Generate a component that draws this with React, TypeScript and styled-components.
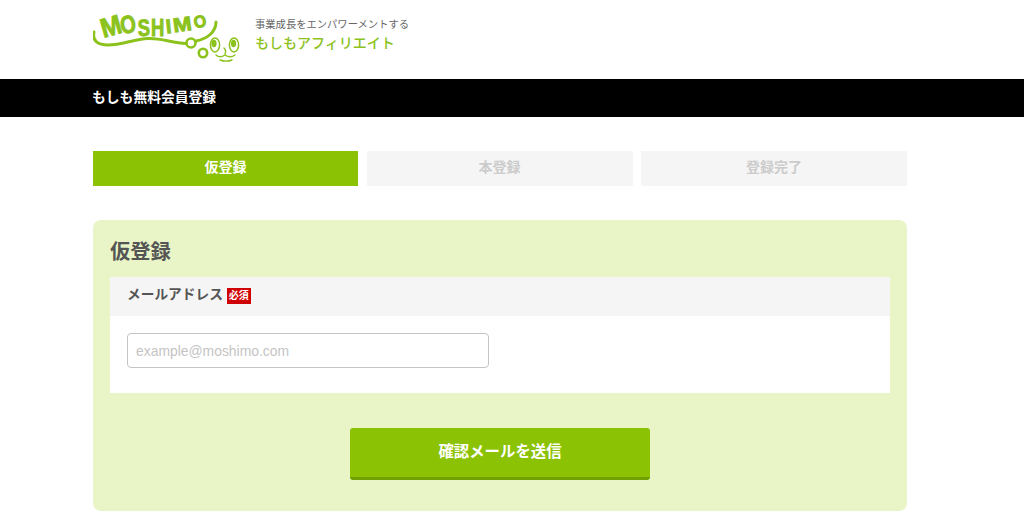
import React from "react";
import styled, { createGlobalStyle } from "styled-components";

const Global = createGlobalStyle`
  html, body { margin: 0; padding: 0; background: #fff; overflow: hidden; }
  body { font-family: "Liberation Sans", "Noto Sans CJK JP", sans-serif; color: #555; }
  * { box-sizing: border-box; }
`;
const Container = styled.div`
  width: 814px;
  margin-left: 93px;
`;
const Header = styled.header`
  height: 79px;
`;
const HeaderInner = styled(Container)`
  display: flex;
  align-items: flex-start;
`;
const LogoSvg = styled.svg`
  display: block;
  width: 150px;
  height: 60px;
  margin-top: 7px;
  flex: none;
`;
const Tagline = styled.div`
  margin: 18px 0 0 12px;
`;
const TagSmall = styled.div`
  font-size: 10.3px;
  line-height: 14px;
  color: #666;
`;
const TagBig = styled.div`
  font-size: 14px;
  line-height: 20px;
  margin-top: 1px;
  font-weight: 500;
  color: #8bc21c;
`;
const Bar = styled.div`
  height: 38px;
  background: #000;
  color: #fff;
`;
const BarText = styled(Container)`
  margin-left: 92px;
  font-size: 13.8px;
  font-weight: 700;
  line-height: 37px;
`;
const Steps = styled(Container)`
  display: grid;
  grid-template-columns: 265px 266px 266px;
  justify-content: space-between;
  margin-top: 34px;
`;
const Step = styled.div<{ $active?: boolean }>`
  height: 35px;
  line-height: 33px;
  text-align: center;
  font-size: 14px;
  font-weight: 700;
  background: ${(p) => (p.$active ? "#8bc204" : "#f5f5f5")};
  color: ${(p) => (p.$active ? "#fff" : "#ccc")};
`;
const Panel = styled(Container)`
  margin-top: 34px;
  height: 291px;
  padding: 17px 17px 0;
  background: #e9f5c6;
  border-radius: 8px;
`;
const Title = styled.h2`
  margin: 0;
  height: 40px;
  font-size: 20.3px;
  line-height: 30px;
  font-weight: 700;
  color: #555;
`;
const FieldHead = styled.div`
  height: 39px;
  padding: 0 0 7px 17px;
  display: flex;
  align-items: center;
  gap: 4px;
  background: #f5f5f5;
  font-size: 13.7px;
  font-weight: 700;
  color: #555;
`;
const Required = styled.span`
  display: block;
  width: 24px;
  height: 16px;
  line-height: 15px;
  text-align: center;
  background: #d00000;
  color: #fff;
  font-size: 10px;
  font-weight: 700;
  white-space: nowrap;
  margin-top: 5px;
`;
const FieldBody = styled.div`
  height: 77px;
  padding: 17px;
  background: #fff;
`;
const Input = styled.input`
  display: block;
  width: 362px;
  height: 35px;
  padding: 0 8px;
  border: 1px solid #c4c4c4;
  border-radius: 4px;
  outline: none;
  font-family: "Liberation Sans", "Noto Sans CJK JP", sans-serif;
  font-size: 13.9px;
  background: #fff;
  &::placeholder { color: #c4c4c4; opacity: 1; }
`;
const Actions = styled.div`
  display: flex;
  justify-content: center;
  margin-top: 35px;
`;
const Submit = styled.button`
  width: 300px;
  height: 52px;
  padding: 0 0 5px;
  border: 0;
  border-bottom: 3px solid #6fa000;
  border-radius: 3px;
  background: #8bc204;
  color: #fff;
  font-family: "Liberation Sans", "Noto Sans CJK JP", sans-serif;
  font-size: 15.4px;
  font-weight: 700;
`;

const letters: [string, number, number, number, number, number][] = [
  ["M", 103.5, 38, -16, 0.92, 27],
  ["O", 121.5, 34, -8, 0.8, 25],
  ["S", 138, 36, -2, 0.78, 23.5],
  ["H", 151, 36, 0, 0.8, 23],
  ["I", 166.5, 33.5, -6, 1, 20],
  ["M", 174, 32.5, -8, 1.12, 20],
  ["O", 195, 28.5, -12, 0.95, 17],
];

const Logo = () => (
  <LogoSvg viewBox="93 7 150 60" aria-label="MOSHIMO">
    <g fill="#8bc21c" stroke="#8bc21c" strokeWidth="0.9" fontFamily="'Liberation Sans', sans-serif" fontWeight="700">
      {letters.map(([c, x, y, r, sx, size], i) => (
        <text key={i} fontSize={size} transform={`translate(${x} ${y}) rotate(${r}) scale(${sx} 1)`}>
          {c}
        </text>
      ))}
    </g>
    <g fill="none" stroke="#8bc21c" strokeLinecap="round">
      <path strokeWidth="3" d="M94 32 C92 41 98 45 108 45 C122 45 134 39 148 38.500 C162 38 172 43 186 43.500" />
      <path strokeWidth="3" d="M196 41 C207 39 216 32 216 22" />
      <circle cx="191" cy="43" r="4.5" strokeWidth="2.6" />
      <circle cx="203" cy="53" r="4.2" strokeWidth="2.6" />
      <path strokeWidth="1.4" d="M216 55 C219 58 222 57 225 55 C228 57 231 58 235 55 M220 60 C224 61.500 228 61.500 232 60 M224 48 C226 50 226 52 225 54" />
    </g>
    <g fill="#fff" stroke="#8bc21c" strokeWidth="1.5">
      <ellipse cx="215" cy="45" rx="4.6" ry="7" />
      <ellipse cx="234" cy="45" rx="4.6" ry="7" />
    </g>
    <g fill="#8bc21c">
      <ellipse cx="214" cy="43.500" rx="2.6" ry="3.8" />
      <ellipse cx="233.500" cy="43.500" rx="2.6" ry="3.8" />
    </g>
  </LogoSvg>
);

export default function App() {
  return (
    <>
      <Global />
      <Header>
        <HeaderInner>
          <Logo />
          <Tagline>
            <TagSmall>事業成長をエンパワーメントする</TagSmall>
            <TagBig>もしもアフィリエイト</TagBig>
          </Tagline>
        </HeaderInner>
      </Header>
      <Bar>
        <BarText>もしも無料会員登録</BarText>
      </Bar>
      <Steps>
        <Step $active>仮登録</Step>
        <Step>本登録</Step>
        <Step>登録完了</Step>
      </Steps>
      <Panel>
        <Title>仮登録</Title>
        <FieldHead>
          メールアドレス
          <Required>必須</Required>
        </FieldHead>
        <FieldBody>
          <Input placeholder="example@moshimo.com" />
        </FieldBody>
        <Actions>
          <Submit>確認メールを送信</Submit>
        </Actions>
      </Panel>
    </>
  );
}
